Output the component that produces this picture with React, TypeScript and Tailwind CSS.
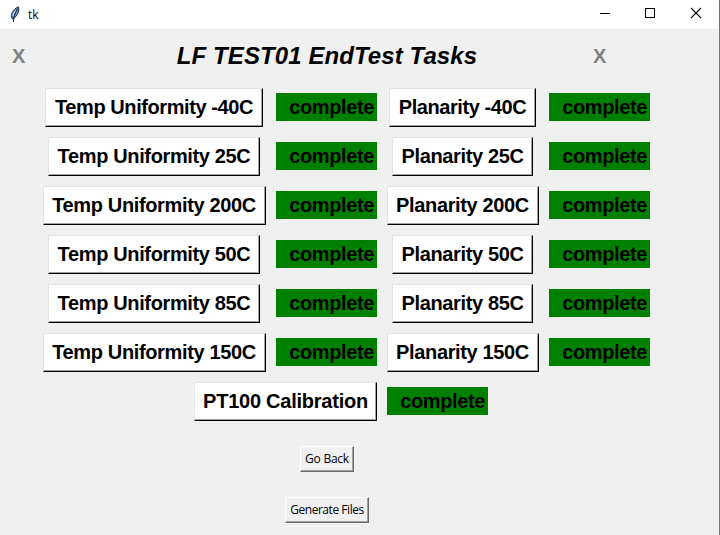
type Task = { name: string; width: string; tracking: string };

const uniformity: Task[] = [
  { name: 'Temp Uniformity -40C', width: 'w-[218px]', tracking: 'tracking-[-0.42px]' },
  { name: 'Temp Uniformity 25C', width: 'w-[212px]', tracking: 'tracking-[-0.36px]' },
  { name: 'Temp Uniformity 200C', width: 'w-[223px]', tracking: 'tracking-[-0.36px]' },
  { name: 'Temp Uniformity 50C', width: 'w-[212px]', tracking: 'tracking-[-0.36px]' },
  { name: 'Temp Uniformity 85C', width: 'w-[212px]', tracking: 'tracking-[-0.36px]' },
  { name: 'Temp Uniformity 150C', width: 'w-[223px]', tracking: 'tracking-[-0.36px]' },
];

const planarity: Task[] = [
  { name: 'Planarity -40C', width: 'w-[147px]', tracking: 'tracking-[-0.42px]' },
  { name: 'Planarity 25C', width: 'w-[141px]', tracking: 'tracking-[-0.36px]' },
  { name: 'Planarity 200C', width: 'w-[152px]', tracking: 'tracking-[-0.36px]' },
  { name: 'Planarity 50C', width: 'w-[141px]', tracking: 'tracking-[-0.36px]' },
  { name: 'Planarity 85C', width: 'w-[141px]', tracking: 'tracking-[-0.36px]' },
  { name: 'Planarity 150C', width: 'w-[152px]', tracking: 'tracking-[-0.36px]' },
];

const calibration: Task = { name: 'PT100 Calibration', width: 'w-[183px]', tracking: 'tracking-[-0.24px]' };

function TaskButton({ task }: { task: Task }) {
  return (
    <button
      className={`${task.width} ${task.tracking} flex h-[39px] shrink-0 items-center justify-center whitespace-nowrap border border-t-[#e3e3e3] border-l-[#e3e3e3] border-r-black border-b-black bg-white text-[20px] leading-[23px] font-bold text-black shadow-[inset_-1px_-1px_0_#a0a0a0]`}
    >
      {task.name}
    </button>
  );
}

function Status() {
  return (
    <span className="mb-px flex h-7 w-[101px] shrink-0 items-center justify-end bg-[#008000] pt-px pr-[3px] text-[20px] leading-[23px] font-bold tracking-[-0.38px] text-black">
      complete
    </span>
  );
}

function SmallButton({ label, width, tracking }: { label: string; width: string; tracking: string }) {
  return (
    <button
      className={`${width} ${tracking} flex h-[26px] items-center justify-center whitespace-nowrap border border-t-white border-l-white border-r-[#696969] border-b-[#696969] bg-[#f0f0f0] font-['Open_Sans','Noto_Sans',sans-serif] text-[12px] leading-4 text-black shadow-[inset_-1px_-1px_0_#a0a0a0]`}
    >
      {label}
    </button>
  );
}

function Feather() {
  return (
    <svg width="10" height="17" viewBox="0 0 10 17" className="shrink-0">
      <path d="M8.500 .8C5.800 1.500 2.600 4.800 1.600 8c-.5 2-.2 3.600.9 5.200 2.300-1.200 4.800-3.800 5.700-6.700C8.900 4.200 9 2.200 8.500.8Z" fill="#5f8fc4" stroke="#16243a" strokeWidth=".9" />
      <path d="M6.500 3.800C4.800 5.500 3.500 7.500 3 10" stroke="#c2daf2" strokeWidth="1.200" fill="none" />
      <path d="M7.800 2.500C5.500 6 3.800 9.500 3.400 16" stroke="#101828" strokeWidth="1" fill="none" />
    </svg>
  );
}

export default function App() {
  return (
    <div className="flex h-[535px] w-[720px] flex-col overflow-hidden border-r border-[#747474] bg-[#f0f0f0] font-['Liberation_Sans',Arial,sans-serif] text-black">
      <header className="flex h-[29px] shrink-0 items-center bg-white pl-[10px]">
        <Feather />
        <span className="ml-2 font-['Open_Sans','Noto_Sans',sans-serif] text-[12px] leading-4">tk</span>
        <svg className="ml-auto shrink-0" width="120" height="29" viewBox="0 0 120 29" fill="none" stroke="black" shapeRendering="crispEdges">
          <path d="M1 13.500h10M46.500 8.500h9v9h-9z" />
          <path d="m92 8 10 10m0-10-10 10" shapeRendering="auto" strokeWidth="1.100" />
        </svg>
      </header>

      <div className="flex h-[59px] shrink-0 items-center pb-[6px] pl-3">
        <span className="w-[14px] text-[20px] leading-6 font-bold text-[#808080]">X</span>
        <h1 className="w-[602px] text-center text-[24px] leading-7 font-bold tracking-[0.09px] italic">LF TEST01 EndTest Tasks</h1>
        <span className="ml-[-35px] text-[20px] leading-6 font-bold text-[#808080]">X</span>
      </div>

      <main className="flex flex-col gap-[10px] pl-[43px]">
        {uniformity.map((task, i) => (
          <div key={task.name} className="flex h-[39px] items-center gap-[10px]">
            <div className="flex w-[223px] justify-center pr-px"><TaskButton task={task} /></div>
            <Status />
            <div className="flex w-[152px] justify-center pr-px"><TaskButton task={planarity[i]} /></div>
            <Status />
          </div>
        ))}
        <div className="flex h-[39px] items-center gap-[10px] pl-[151px]">
          <TaskButton task={calibration} />
          <Status />
        </div>
      </main>

      <footer className="mt-[25px] flex w-[654px] flex-col items-center gap-[25px]">
        <SmallButton label="Go Back" width="w-[54px]" tracking="tracking-[-0.25px]" />
        <SmallButton label="Generate Files" width="w-[84px]" tracking="tracking-[-0.45px]" />
      </footer>
    </div>
  );
}
